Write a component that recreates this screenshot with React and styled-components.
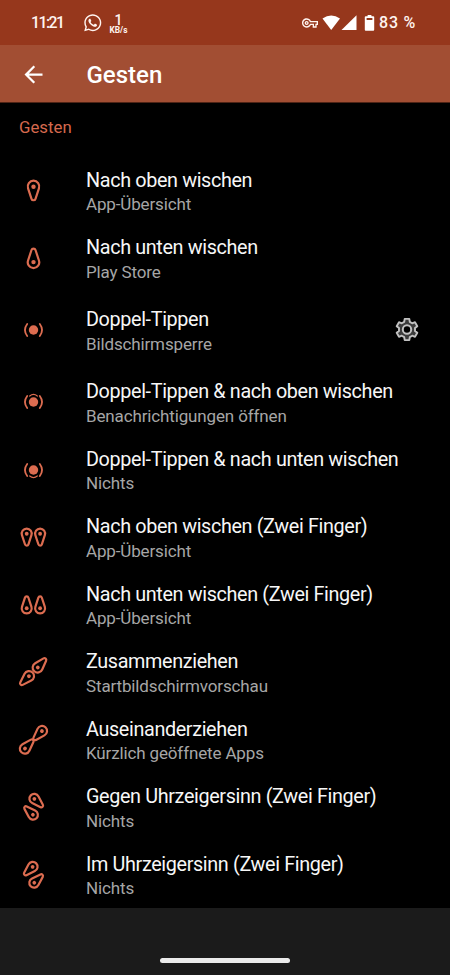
import React from "react";
import styled, { createGlobalStyle } from "styled-components";
import { FaWhatsapp } from "react-icons/fa";
import { MdArrowBack, MdOutlineVpnKey } from "react-icons/md";

const GlobalStyle = createGlobalStyle`
  * {
    box-sizing: border-box;
  }

  body {
    margin: 0;
    background: #000000;
    font-family: Roboto, "Liberation Sans", sans-serif;
  }
`;

const Screen = styled.div`
  display: flex;
  flex-direction: column;
  width: 450px;
  height: 975px;
  overflow: hidden;
  background: #000000;
`;

const StatusBar = styled.header`
  display: flex;
  align-items: center;
  height: 45px;
  padding: 1px 33px 0 31px;
  background: #96371c;
  color: #fff4f0;
`;

const Clock = styled.span`
  width: 52px;
  font-size: 15.8px;
  font-weight: 500;
  line-height: 20px;
  letter-spacing: -1.5px;
`;

const Speed = styled.div`
  display: flex;
  flex-direction: column;
  align-items: center;
  width: 20px;
  margin-left: 6px;
  padding-top: 3px;
`;

const SpeedValue = styled.span`
  font-size: 14px;
  font-weight: 500;
  line-height: 11px;
`;

const SpeedUnit = styled.span`
  font-size: 8.3px;
  font-weight: 700;
  line-height: 8px;
`;

const StatusIcons = styled.div`
  display: flex;
  align-items: center;
  margin-left: auto;
`;

const Battery = styled.span`
  width: 38px;
  margin-left: -1px;
  font-size: 16px;
  font-weight: 500;
  line-height: 20px;
  letter-spacing: 0.8px;
  white-space: nowrap;
`;

const AppBar = styled.div`
  display: flex;
  align-items: center;
  height: 58px;
  padding: 2px 20px 0;
  background: #a24e33;
  border-bottom: 1px solid #4f2416;
  color: #ffffff;
`;

const AppTitle = styled.h1`
  margin: 0 0 0 39.5px;
  font-size: 24px;
  font-weight: 500;
  line-height: 32px;
`;

const SectionTitle = styled.h2`
  height: 53.75px;
  margin: 0;
  padding: 14px 19px 0;
  font-size: 16.8px;
  font-weight: 400;
  line-height: 20px;
  color: #d5694e;
`;

const Row = styled.div`
  display: flex;
  align-items: center;
  height: ${(props) => (props.$tall ? "76.5px" : "67.5px")};
  padding: 0 29px 0 15px;
`;

const IconBox = styled.svg`
  flex: none;
  width: 36px;
  height: 36px;
  margin-right: 35px;
  color: #dc6c50;
`;

const Labels = styled.div`
  display: flex;
  flex-direction: column;
  flex: 1;
  padding-top: 4px;
  white-space: nowrap;
`;

const Label = styled.span`
  font-size: 19.8px;
  line-height: 23.5px;
  letter-spacing: -0.36px;
  color: #f7f7f7;
`;

const Value = styled.span`
  font-size: 17px;
  line-height: 24px;
  letter-spacing: -0.14px;
  color: #a6a6a6;
`;

const Footer = styled.footer`
  display: flex;
  flex: 1;
  justify-content: center;
  align-items: flex-end;
  padding-bottom: 12px;
  background: #1b1b1b;
`;

const HomeHandle = styled.div`
  width: 130px;
  height: 5px;
  border-radius: 3px;
  background: #ebebeb;
`;

// fingerprint drop: round head at (x, y), tail pointing down before rotation
function Drop({ x, y, angle = 0, size = 0.87 }) {
  return (
    <g transform={`translate(${x} ${y}) rotate(${angle}) scale(${size})`}>
      <path
        d="M-5.45 1.9A5.75 5.75 0 1 1 5.45 1.9L2 12.4A2.1 2.1 0 0 1-2 12.4Z"
        fill="none"
        stroke="currentColor"
        strokeWidth={2.2 / size}
        strokeLinejoin="round"
      />
      <circle cy="0.3" r="2.2" fill="currentColor" />
    </g>
  );
}

function Tap({ arc }) {
  return (
    <g fill="none" stroke="currentColor" strokeLinecap="round">
      <circle r="4.7" fill="currentColor" stroke="none" />
      <path d="M-6.3-6Q-10.8 0-6.3 6M6.3-6Q10.8 0 6.3 6" strokeWidth="1.8" />
      {arc && <path d={arc} strokeWidth="1.2" />}
    </g>
  );
}

function Gear() {
  return (
    <svg width="28" height="28" viewBox="-14 -13.5 28 28">
      <g fill="#3c3c3c" stroke="#c2c2c2" strokeWidth="1.9" strokeLinejoin="round">
        <path d="M-2.8-7.6L-2.3-10.6H2.3L2.8-7.6L5.2-6.2L8-7.3L10.3-3.3L8-1.4V1.4L10.3 3.3L8 7.3L5.2 6.2L2.8 7.6L2.3 10.6H-2.3L-2.8 7.6L-5.2 6.2L-8 7.3L-10.3 3.3L-8 1.4V-1.4L-10.3-3.3L-8-7.3L-5.2-6.2Z" />
        <circle r="4.2" fill="#000000" strokeWidth="2" />
      </g>
    </svg>
  );
}

const icons = {
  up: <Drop x={0} y={-4.6} size={1} />,
  down: <Drop x={0} y={4.4} angle={180} size={1} />,
  tap: <Tap />,
  tapUp: <Tap arc="M-3.8-6Q0-9.3 3.8-6" />,
  tapDown: <Tap arc="M-3.8 6Q0 9.3 3.8 6" />,
  twoUp: (
    <>
      <Drop x={-6.8} y={-3.5} />
      <Drop x={6.6} y={-3.5} />
    </>
  ),
  twoDown: (
    <>
      <Drop x={-6.8} y={3.5} angle={180} />
      <Drop x={6.6} y={3.5} angle={180} />
    </>
  ),
  pinch: (
    <>
      <Drop x={4.1} y={-4.4} angle={-138} />
      <Drop x={-4.4} y={4} angle={45} />
    </>
  ),
  spread: (
    <>
      <Drop x={8.6} y={-9.1} angle={43} />
      <Drop x={-8.7} y={8.7} angle={-137} />
    </>
  ),
  counter: (
    <>
      <Drop x={0.7} y={-8.3} angle={-46} size={0.84} />
      <Drop x={-0.4} y={7.9} angle={134} size={0.84} />
    </>
  ),
  clockwise: (
    <>
      <Drop x={-0.7} y={-8.3} angle={46} size={0.84} />
      <Drop x={0.6} y={7.9} angle={-134} size={0.84} />
    </>
  ),
};

const gestures = [
  { icon: "up", label: "Nach oben wischen", value: "App-Übersicht" },
  { icon: "down", label: "Nach unten wischen", value: "Play Store" },
  { icon: "tap", label: "Doppel-Tippen", value: "Bildschirmsperre", settings: true },
  { icon: "tapUp", label: "Doppel-Tippen & nach oben wischen", value: "Benachrichtigungen öffnen" },
  { icon: "tapDown", label: "Doppel-Tippen & nach unten wischen", value: "Nichts" },
  { icon: "twoUp", label: "Nach oben wischen (Zwei Finger)", value: "App-Übersicht" },
  { icon: "twoDown", label: "Nach unten wischen (Zwei Finger)", value: "App-Übersicht" },
  { icon: "pinch", label: "Zusammenziehen", value: "Startbildschirmvorschau" },
  { icon: "spread", label: "Auseinanderziehen", value: "Kürzlich geöffnete Apps" },
  { icon: "counter", label: "Gegen Uhrzeigersinn (Zwei Finger)", value: "Nichts" },
  { icon: "clockwise", label: "Im Uhrzeigersinn (Zwei Finger)", value: "Nichts" },
];

export default function App() {
  return (
    <Screen>
      <GlobalStyle />
      <StatusBar>
        <Clock>11:21</Clock>
        <FaWhatsapp size={19.5} />
        <Speed>
          <SpeedValue>1</SpeedValue>
          <SpeedUnit>KB/s</SpeedUnit>
        </Speed>
        <StatusIcons>
          <MdOutlineVpnKey size={16} />
          <svg width="62" height="18" viewBox="0 0 62 18" fill="#ffffff">
            <path d="M4.5 4.6Q13.2-1.8 22 4.6L13.2 16Z" />
            <path d="M38.5 1.2V16H23.5Z" />
            <path
              d="M49.6 1H53.4V2.2H55.3Q56.2 2.2 56.2 3.1V15.7Q56.2 16.7 55.3 16.7H47.7Q46.8 16.7 46.8 15.7V3.1Q46.8 2.2 47.7 2.2H49.6ZM48.6 4V6H54.4V4Z"
              fillRule="evenodd"
            />
          </svg>
          <Battery>83 %</Battery>
        </StatusIcons>
      </StatusBar>
      <AppBar>
        <MdArrowBack size={27} />
        <AppTitle>Gesten</AppTitle>
      </AppBar>
      <SectionTitle>Gesten</SectionTitle>
      {gestures.map(({ icon, label, value, settings }) => (
        <Row key={icon} $tall={settings}>
          <IconBox viewBox="-18.5 -18 36 36">{icons[icon]}</IconBox>
          <Labels>
            <Label>{label}</Label>
            <Value>{value}</Value>
          </Labels>
          {settings && <Gear />}
        </Row>
      ))}
      <Footer>
        <HomeHandle />
      </Footer>
    </Screen>
  );
}
